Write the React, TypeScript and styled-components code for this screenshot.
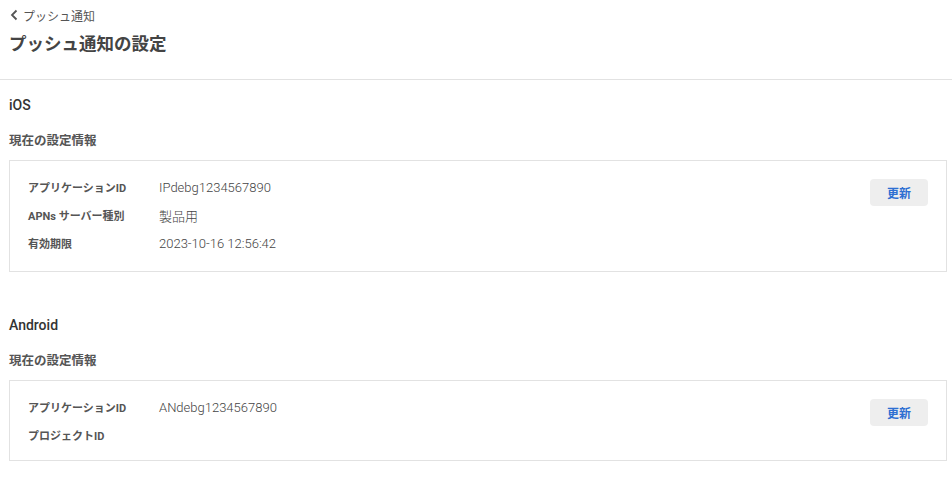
import { Fragment } from "react";
import styled, { createGlobalStyle } from "styled-components";

const GlobalStyle = createGlobalStyle`
  html, body {
    margin: 0;
    padding: 0;
    background: #ffffff;
  }
  body {
    font-family: Roboto, "Noto Sans CJK JP", sans-serif;
    color: #444;
  }
`

const Page = styled.div`
  width: 952px;
`
const Header = styled.header`
  padding: 6px 9px 0;
  height: 73px;
  border-bottom: 1px solid #e2e2e2;
`
const BackLink = styled.a`
  display: flex;
  align-items: center;
  gap: 3px;
  height: 18px;
  font-size: 12px;
  color: #555;
  text-decoration: none;
  cursor: pointer;
`
const Title = styled.h1`
  margin: 7px 0 0;
  font-size: 17.5px;
  line-height: 26px;
  font-weight: 700;
  color: #444;
`
const Section = styled.section<{ $top: number }>`
  padding: ${(p) => p.$top}px 5px 0 9px;
`
const PlatformName = styled.h2`
  margin: 0;
  font-size: 14px;
  line-height: 20px;
  font-weight: 500;
  color: #333;
`
const SubHeading = styled.h3`
  margin: 17px 0 10px;
  font-size: 12.5px;
  line-height: 18px;
  font-weight: 700;
  color: #555;
`
const Card = styled.div<{ $bottom: number }>`
  display: flex;
  justify-content: space-between;
  align-items: flex-start;
  border: 1px solid #e2e2e2;
  padding: 12px 18px ${(p) => p.$bottom}px 18px;
`
const InfoList = styled.dl`
  margin: 0;
  display: grid;
  grid-template-columns: 131px auto;
  grid-auto-rows: 28px;
  align-items: center;
`
const Label = styled.dt`
  font-size: 11px;
  font-weight: 700;
  color: #555;
`
const Value = styled.dd`
  margin: 0;
  font-size: 13px;
  font-weight: 300;
  color: #444;
`
const UpdateButton = styled.button`
  margin-top: 6px;
  width: 58px;
  height: 27px;
  border: none;
  border-radius: 4px;
  background: #eeeeee;
  color: #2d6fd2;
  font-family: inherit;
  font-size: 12px;
  font-weight: 700;
  cursor: pointer;
`

interface Row {
  label: string
  value: string
}

interface PlatformProps {
  name: string
  rows: Array<Row>
  top: number
  bottom: number
}

const Platform = (props: PlatformProps) => {
  const { name, rows, top, bottom } = props

  return (
    <Section $top={top}>
      <PlatformName>{name}</PlatformName>
      <SubHeading>現在の設定情報</SubHeading>
      <Card $bottom={bottom}>
        <InfoList>
          {rows.map((row) => (
            <Fragment key={row.label}>
              <Label>{row.label}</Label>
              <Value>{row.value}</Value>
            </Fragment>
          ))}
        </InfoList>
        <UpdateButton>更新</UpdateButton>
      </Card>
    </Section>
  )
}

const iosRows: Array<Row> = [
  { label: "アプリケーションID", value: "IPdebg1234567890" },
  { label: "APNs サーバー種別", value: "製品用" },
  { label: "有効期限", value: "2023-10-16 12:56:42" },
]

const androidRows: Array<Row> = [
  { label: "アプリケーションID", value: "ANdebg1234567890" },
  { label: "プロジェクトID", value: "" },
]

export default function App() {
  return (
    <Page>
      <GlobalStyle />
      <Header>
        <BackLink>
          <svg width="11" height="12" viewBox="0 0 11 12" fill="none">
            <path d="M7.5 1.5 L3 6 L7.5 10.5" stroke="#555" strokeWidth="1.8" />
          </svg>
          プッシュ通知
        </BackLink>
        <Title>プッシュ通知の設定</Title>
      </Header>
      <Platform name="iOS" rows={iosRows} top={15} bottom={14} />
      <Platform name="Android" rows={androidRows} top={43} bottom={11} />
    </Page>
  )
}
